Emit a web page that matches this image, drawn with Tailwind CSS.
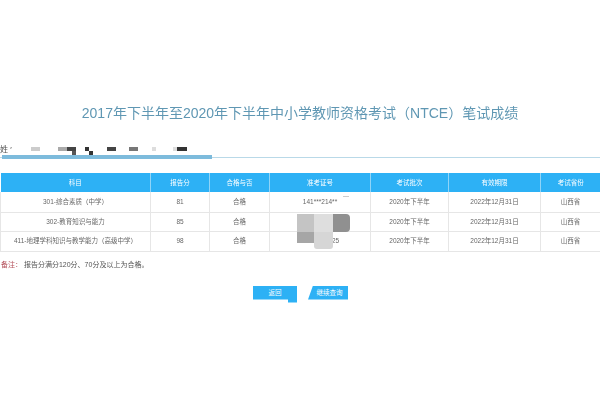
<!DOCTYPE html>
<html lang="zh-CN">
<head>
  <meta charset="UTF-8">
  <title>NTCE 笔试成绩</title>
  <script src="https://cdn.jsdelivr.net/npm/@tailwindcss/browser@4"></script>
</head>
<body class="bg-white w-[600px] h-[400px] overflow-hidden font-['Liberation_Sans','Noto_Sans_CJK_SC',sans-serif]">
  <div class="relative w-[600px] h-[400px] pt-[103px] blur-[0.35px]">
    <h1 class="text-center text-[14px] leading-[20px] text-[#5f97b3] font-normal">2017年下半年至2020年下半年中小学教师资格考试（NTCE）笔试成绩</h1>

    <!-- 姓名 (打码) -->
    <div class="mt-[18px] h-[14px] text-[8px] leading-[17px] text-[#555]">姓 ′</div>
    <div class="flex h-[3px] items-start border-b border-[#b9d9e8]">
      <div class="ml-[2px] w-[210px] h-[4px] shrink-0 bg-[#7dbbdc]"></div>
    </div>

    <table class="mt-[15px] w-[600px] table-fixed border-collapse text-[6.5px] text-[#666]">
      <colgroup>
        <col class="w-[150px]"><col class="w-[59px]"><col class="w-[60px]"><col class="w-[101px]"><col class="w-[78px]"><col class="w-[92px]"><col class="w-[60px]">
      </colgroup>
      <thead>
        <tr class="h-[19px] bg-[#2db1f5] text-white">
          <th class="font-normal border-r border-[#8fd4f8]">科目</th>
          <th class="font-normal border-r border-[#8fd4f8]">报告分</th>
          <th class="font-normal border-r border-[#8fd4f8]">合格与否</th>
          <th class="font-normal border-r border-[#8fd4f8]">准考证号</th>
          <th class="font-normal border-r border-[#8fd4f8]">考试批次</th>
          <th class="font-normal border-r border-[#8fd4f8]">有效期限</th>
          <th class="font-normal">考试省份</th>
        </tr>
      </thead>
      <tbody class="text-center">
        <tr class="h-[20px] border-b border-[#e6e6e6]">
          <td class="border-x border-[#e6e6e6]">301-综合素质（中学）</td>
          <td class="border-r border-[#e6e6e6]">81</td>
          <td class="border-r border-[#e6e6e6]">合格</td>
          <td class="border-r border-[#e6e6e6]">141***214**</td>
          <td class="border-r border-[#e6e6e6]">2020年下半年</td>
          <td class="border-r border-[#e6e6e6]">2022年12月31日</td>
          <td class="border-r border-[#e6e6e6]">山西省</td>
        </tr>
        <tr class="h-[19px] border-b border-[#e6e6e6]">
          <td class="border-x border-[#e6e6e6]">302-教育知识与能力</td>
          <td class="border-r border-[#e6e6e6]">85</td>
          <td class="border-r border-[#e6e6e6]">合格</td>
          <td class="border-r border-[#e6e6e6]"></td>
          <td class="border-r border-[#e6e6e6]">2020年下半年</td>
          <td class="border-r border-[#e6e6e6]">2022年12月31日</td>
          <td class="border-r border-[#e6e6e6]">山西省</td>
        </tr>
        <tr class="h-[20px] border-b border-[#e6e6e6]">
          <td class="border-x border-[#e6e6e6]">411-地理学科知识与教学能力（高级中学）</td>
          <td class="border-r border-[#e6e6e6]">98</td>
          <td class="border-r border-[#e6e6e6]">合格</td>
          <td class="border-r border-[#e6e6e6]">412********25</td>
          <td class="border-r border-[#e6e6e6]">2020年下半年</td>
          <td class="border-r border-[#e6e6e6]">2022年12月31日</td>
          <td class="border-r border-[#e6e6e6]">山西省</td>
        </tr>
      </tbody>
    </table>

    <p class="mt-[8px] pl-[1px] text-[7px] leading-[10px] text-[#555]"><span class="text-[#b5525c]">备注：</span> 报告分满分120分、70分及以上为合格。</p>

    <div class="mt-[16px] flex gap-[11px] pl-[253px] items-start">
      <button class="w-[44px] h-[17px] pb-[3px] bg-[#2db1f5] text-white text-[6.5px] [clip-path:polygon(0_0,100%_0,100%_100%,35px_100%,35px_14px,0_14px)]">返回</button>
      <button class="w-[40px] h-[14px] pl-[3px] bg-[#2db1f5] text-white text-[6.5px] [clip-path:polygon(5px_0,100%_0,100%_100%,0_100%)]">继续查询</button>
    </div>

    <!-- 打码色块 -->
    <div class="absolute left-[31px] top-[147px] w-[9px] h-[4px] bg-[#ccc]"></div>
    <div class="absolute left-[58px] top-[147px] w-[9px] h-[4px] bg-[#aaa]"></div>
    <div class="absolute left-[67px] top-[147px] w-[9px] h-[4px] bg-[#444]"></div>
    <div class="absolute left-[72px] top-[151px] w-[4px] h-[4px] bg-[#555]"></div>
    <div class="absolute left-[85px] top-[147px] w-[4px] h-[4px] bg-[#333]"></div>
    <div class="absolute left-[89px] top-[151px] w-[4px] h-[4px] bg-[#333]"></div>
    <div class="absolute left-[107px] top-[147px] w-[9px] h-[4px] bg-[#444]"></div>
    <div class="absolute left-[129px] top-[147px] w-[9px] h-[4px] bg-[#777]"></div>
    <div class="absolute left-[152px] top-[147px] w-[4px] h-[4px] bg-[#ddd]"></div>
    <div class="absolute left-[173px] top-[147px] w-[4px] h-[4px] bg-[#ddd]"></div>
    <div class="absolute left-[177px] top-[147px] w-[10px] h-[4px] bg-[#333]"></div>

    <div class="absolute left-[343px] top-[196px] w-[6px] h-[1px] bg-[#ccc]"></div>
    <div class="absolute left-[297px] top-[214px] w-[17px] h-[18px] bg-[#c4c4c4]"></div>
    <div class="absolute left-[297px] top-[232px] w-[17px] h-[11px] bg-[#a6a6a6]"></div>
    <div class="absolute left-[314px] top-[214px] w-[19px] h-[18px] bg-[#dedede]"></div>
    <div class="absolute left-[314px] top-[232px] w-[19px] h-[17px] rounded-b-[3px] bg-[#d6d6d6]"></div>
    <div class="absolute left-[333px] top-[214px] w-[17px] h-[18px] rounded-r-[4px] bg-[#909090]"></div>
  </div>
</body>
</html>
